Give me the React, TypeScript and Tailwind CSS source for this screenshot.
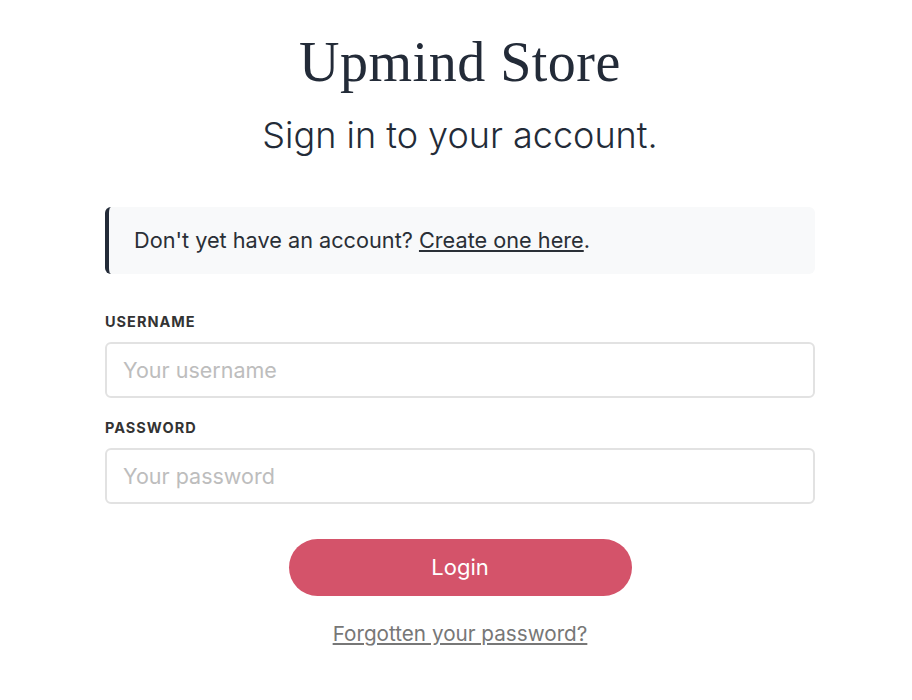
export default function App() {
  return (
    <div className="min-h-[700px] bg-white pl-2 font-['Inter','Liberation_Sans',sans-serif]">
      <div className="mx-auto flex w-[710px] flex-col items-center pt-[30px]">
        <h1 className="font-['Liberation_Serif',serif] text-[56px] leading-[64px] tracking-[0.5px] text-[#232b38]">
          Upmind Store
        </h1>
        <h2 className="mt-[17px] text-[36px] font-light leading-[48px] text-[#232b38]">Sign in to your account.</h2>

        <div className="mt-[48px] flex h-[67px] w-full items-center rounded-md border-l-4 border-[#232b38] bg-[#f8f9fa] pl-[25px] text-[21.7px] text-[#2a2f36]">
          <span>
            Don't yet have an account?{' '}
            <a href="#" className="underline underline-offset-2">
              Create one here
            </a>
            .
          </span>
        </div>

        <form className="mt-[38px] flex w-full flex-col">
          <label className="text-[14.5px] font-bold uppercase leading-[20px] tracking-[1px] text-[#333]">Username</label>
          <input
            type="text"
            placeholder="Your username"
            className="mt-[10px] h-[56px] w-full rounded-md border-2 border-[#e2e2e2] px-[16px] text-[21.5px] text-[#333] outline-none placeholder:text-[#bdbdbd]"
          />
          <label className="mt-[20px] text-[14.5px] font-bold uppercase leading-[20px] tracking-[1px] text-[#333]">
            Password
          </label>
          <input
            type="password"
            placeholder="Your password"
            className="mt-[10px] h-[56px] w-full rounded-md border-2 border-[#e2e2e2] px-[16px] text-[21.5px] text-[#333] outline-none placeholder:text-[#bdbdbd]"
          />
          <button
            type="button"
            className="mx-auto mt-[35px] h-[57px] w-[343px] rounded-full bg-[#d4536a] text-[22px] text-white"
          >
            Login
          </button>
          <a href="#" className="mx-auto mt-[22px] text-[20.7px] text-[#777] underline underline-offset-2">
            Forgotten your password?
          </a>
        </form>
      </div>
    </div>
  )
}
